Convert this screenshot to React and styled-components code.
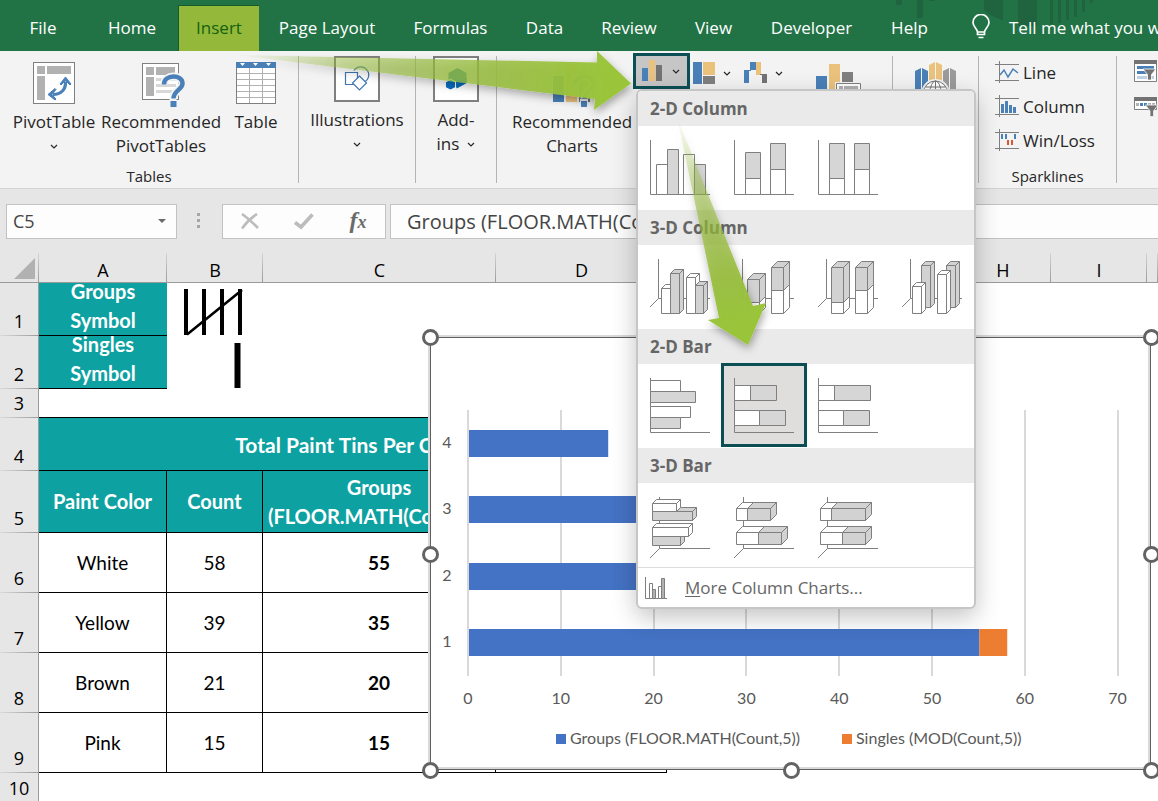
import React from 'react'
import styled, { createGlobalStyle, css } from 'styled-components';

const GlobalStyle=createGlobalStyle`
*{
  box-sizing:border-box;
}
body{
  margin:0;
  overflow:hidden;
  background:#ffffff;
}
button,input{
  font:inherit;
  color:inherit;
}
button{
  border:none;
  padding:0;
  background:none;
  cursor:pointer;
}
svg{
  display:block;
}
`

const Page=styled.div`
position:relative;
min-height:100vh;
display:flex;
flex-direction:column;
overflow:hidden;
font-family:"Open Sans","Noto Sans",sans-serif;
font-size:17px;
color:#262626;
`

/* tab strip */

const TabStrip=styled.nav`
position:relative;
display:flex;
align-items:flex-end;
height:51px;
background:#217346;
color:#ffffff;
white-space:nowrap;
`

const StripArt=styled.svg`
position:absolute;
top:0;
left:880px;
`

const Tab=styled.button`
position:relative;
flex:none;
height:46px;
padding-bottom:2px;
width:${({$width})=>$width}px;
${({$active})=>$active&&css`
  background:#94b93a;
  color:#13610f;
  border-top:1px solid #155c2c;
  border-left:1px solid #155c2c;
`}
`

const TellMe=styled.button`
position:relative;
display:flex;
align-items:center;
gap:19px;
height:46px;
padding-bottom:2px;
margin-left:24px;
`

/* ribbon */

const Ribbon=styled.div`
display:flex;
height:138px;
padding:5px 0;
background:#f3f3f3;
border-bottom:1px solid #d2d2d2;
`

const Group=styled.section`
flex:none;
display:flex;
flex-direction:column;
width:${({$width})=>$width}px;
border-right:${({$last})=>$last?'none':'1px solid #b4b4b4'};
`

const GroupItems=styled.div`
flex:1;
display:flex;
justify-content:${({$center})=>$center?'center':'flex-start'};
gap:3px;
padding-left:${({$left})=>$left||0}px;
`

const GroupName=styled.h2`
margin:0;
font-size:15px;
font-weight:400;
line-height:14px;
text-align:center;
`

const BigButton=styled.button`
display:flex;
flex-direction:column;
align-items:center;
justify-content:flex-start;
gap:6px;
width:${({$width})=>$width}px;
padding-top:${({$boxed})=>$boxed?0:6}px;
line-height:24px;
white-space:nowrap;
svg{
  flex:none;
  overflow:visible;
}
`

const IconBox=styled.span`
display:flex;
align-items:center;
justify-content:center;
width:46px;
height:46px;
border:2px solid #7f7f7f;
background:#ffffff;
`

const Label=styled.span`
display:flex;
flex-direction:column;
align-items:center;
`

const InlineLabel=styled.span`
display:flex;
align-items:center;
gap:8px;
`

const ChartButtons=styled.div`
position:relative;
display:flex;
align-items:flex-start;
margin-left:-4px;
`

const ChartButton=styled.button`
display:flex;
align-items:center;
gap:8px;
width:51px;
height:36px;
padding-left:3px;
padding-bottom:2px;
`

const OpenChartButton=styled(ChartButton)`
width:57px;
margin-top:-3px;
padding-left:6px;
padding-bottom:0;
border:3px solid #0b4f55;
background:#c6c6c6;
`

const PivotChartButton=styled.button`
margin:6px 0 0 24px;
`

const SparkList=styled.div`
display:flex;
flex-direction:column;
padding-left:16px;
`

const SparkButton=styled.button`
display:flex;
align-items:center;
gap:4px;
height:34px;
line-height:24px;
`

const FilterList=styled.div`
display:flex;
flex-direction:column;
gap:14px;
padding:4px 0 0 17px;
`

/* drop-down gallery */

const Gallery=styled.div`
position:absolute;
z-index:5;
top:33px;
left:3px;
width:340px;
border:2px solid #c6c6c6;
border-radius:6px;
overflow:hidden;
background:#ffffff;
color:#666666;
box-shadow:0 8px 24px rgba(0,0,0,0.24);
`

const GalleryTitle=styled.h3`
margin:0;
padding-left:12px;
background:#eaeaea;
font-size:17px;
font-weight:700;
line-height:35px;
`

const GalleryRow=styled.div`
display:flex;
align-items:flex-start;
height:84px;
`

const GalleryItem=styled.button`
display:flex;
align-items:flex-start;
width:84px;
height:82px;
${({$selected})=>$selected&&css`
  background:#e0dedc;
  box-shadow:0 0 0 1px #0b4f55,inset 0 0 0 2px #0b4f55;
`}
`

const MoreCharts=styled.button`
display:flex;
align-items:center;
gap:18px;
width:100%;
height:40px;
padding-left:7px;
border-top:1px solid #dcdcdc;
u{
  text-underline-offset:2px;
}
`

/* formula bar */

const FormulaRow=styled.div`
display:flex;
align-items:center;
height:64px;
padding-left:6px;
background:#e6e6e6;
font-size:18px;
color:#444444;
`

const NameBox=styled.label`
display:flex;
align-items:center;
width:171px;
height:35px;
padding-right:10px;
border:1px solid #c2c2c2;
background:#fdfdfd;
input{
  flex:1;
  min-width:0;
  padding:0 6px;
  border:none;
  background:none;
  outline:none;
}
`

const Dots=styled.svg`
margin:0 21px 0 20px;
`

const FxBox=styled.div`
display:flex;
align-items:center;
justify-content:space-between;
width:164px;
height:35px;
margin-right:4px;
padding:0 17px 0 18px;
border:1px solid #c2c2c2;
background:#fdfdfd;
`

const Fx=styled.button`
width:20px;
font-family:"Liberation Serif",serif;
font-size:24px;
font-style:italic;
font-weight:700;
line-height:28px;
color:#6a6a6a;
span{
  font-size:18px;
}
`

const FormulaInput=styled.input`
flex:1;
min-width:0;
height:35px;
padding:0 16px;
border:1px solid #c2c2c2;
border-right:none;
background:#fdfdfd;
font-size:20px;
outline:none;
`

/* sheet */

const Sheet=styled.main`
position:relative;
flex:1;
`

const Grid=styled.table`
width:100%;
table-layout:fixed;
border-collapse:separate;
border-spacing:0;
font-family:Lato,"Open Sans",sans-serif;
font-size:19px;
line-height:29px;
color:#000000;
th,td{
  padding:0;
}
`

const ColumnHead=styled.th`
height:30px;
border-bottom:1px solid #9b9b9b;
background:linear-gradient(#d4d4d4,#9b9b9b) right / 1px 100% no-repeat #e6e6e6;
font-family:"Open Sans",sans-serif;
font-size:18px;
font-weight:400;
line-height:24px;
vertical-align:bottom;
`

const Corner=styled(ColumnHead)`
svg{
  margin:0 0 3px 14px;
}
`

const RowHead=styled.th`
height:${({$height})=>$height}px;
border-right:1px solid #9b9b9b;
background:linear-gradient(90deg,#dadada,#9b9b9b) bottom / 100% 1px no-repeat #e6e6e6;
font-family:"Open Sans",sans-serif;
font-size:18px;
font-weight:400;
line-height:29px;
vertical-align:bottom;
`

const Cell=styled.td`
text-align:center;
vertical-align:middle;
font-weight:${({$bold,$teal})=>$bold||$teal?700:400};
border-bottom:${({$line})=>$line?'1px solid #000000':'none'};
border-right:${({$side})=>$side?'1px solid #000000':'none'};
${({$teal})=>$teal&&css`
  background:#0ea1a1;
  color:#ffffff;
  font-size:20px;
`}
`

const TitleCell=styled(Cell)`
font-size:21px;
`

const Wrapped=styled.div`
display:flex;
flex-direction:column;
align-items:center;
justify-content:${({$bottom})=>$bottom?'flex-end':'center'};
height:${({$height})=>$height}px;
overflow:hidden;
white-space:nowrap;
`

const ChartFrame=styled.figure`
position:absolute;
z-index:1;
top:84px;
left:430px;
width:721px;
height:433px;
margin:0;
background:#ffffff;
box-shadow:-2px -2px 0 #d9d9d9,inset 0 0 0 1px #5f5f5f,inset -3px -3px 0 #d9d9d9;
`

const Handle=styled.span`
position:absolute;
top:${({$y})=>$y}%;
left:${({$x})=>$x}%;
width:17px;
height:17px;
margin:-8px;
border:3px solid #636363;
border-radius:50%;
background:#ffffff;
`

const Arrows=styled.svg`
position:absolute;
z-index:9;
top:0;
left:0;
pointer-events:none;
`

const Chevron=()=>(
  <svg width="8" height="24" viewBox="0 0 8 24" fill="none" stroke="#262626" strokeWidth="1.2">
    <path d="M1 11 4 14 7 11"/>
  </svg>
)

const PivotTableIcon=()=>(
  <svg width="42" height="42" viewBox="0 0 42 42">
    <rect x=".5" y=".5" width="41" height="41" fill="#fff" stroke="#7f7f7f"/>
    <path d="M4 4h8v8H4zM14 4h24v8H14zM4 14h8v24H4z" fill="#b1b1b1"/>
    <path d="M20 32.500c8 0 13-5 12.500-13" fill="none" stroke="#4a80b8" strokeWidth="3.200"/>
    <path d="M32.500 15l5.500 7-1 1-4.500-4.500-4.500 4.500-1-1zM15 32.500l7-6 1 1-4 5 4 4.500-1 1z" fill="#4a80b8" stroke="#4a80b8"/>
  </svg>
)

const RecommendedPivotIcon=()=>(
  <svg width="47" height="42" viewBox="-4 0 47 42">
    <rect x=".5" y="1.500" width="36" height="36" fill="#fff" stroke="#7f7f7f"/>
    <path d="M4 5h8v8H4zM14 5h19v8H14zM4 15h8v19H4z" fill="#b1b1b1"/>
    <path d="M14 16h20v3H14zM14 22h20v3H14zM14 28h20v3H14z" fill="#d8d8d8"/>
    <path d="M22 22.500c0-10.500 18.500-10.500 18.500-1 0 6-9 7-9 15" fill="none" stroke="#f3f3f3" strokeWidth="8"/>
    <path d="M22 22.500c0-10.500 18.500-10.500 18.500-1 0 6-9 7-9 15" fill="none" stroke="#4a80b8" strokeWidth="4.500"/>
    <path d="M27.500 37h7v8h-7z" fill="#f3f3f3"/>
    <path d="M28.500 39h6v6h-6z" fill="#4a80b8"/>
  </svg>
)

const TableIcon=()=>(
  <svg width="40" height="42" viewBox="0 0 40 42">
    <rect x=".5" y=".5" width="39" height="41" fill="#fff" stroke="#7f7f7f"/>
    <path d="M13.500 6v36M26.500 6v36M0 11.500h40M0 17.500h40M0 23.500h40M0 29.500h40M0 35.500h40" stroke="#b1b1b1" fill="none"/>
    <path d="M0 0h40v6H0z" fill="#4a80b8"/>
    <path d="M4 1h5L6.500 4zM17 1h5l-2.500 3zM30 1h5l-2.500 3z" fill="#fff"/>
    <path d="M.5 6v35.500h39V6" stroke="#7f7f7f" fill="none"/>
  </svg>
)

const ShapesIcon=()=>(
  <svg width="26" height="26" viewBox="0 0 26 26" fill="none" stroke="#3f76b0" strokeWidth="1.200">
    <path d="M10 4.500a8 8 0 1 1 9 12"/>
    <path d="M1.500 6.500h12v12h-12z" fill="#fff"/>
    <path d="M15.500 10 22.500 17l-7 7-7-7z" fill="#fff"/>
  </svg>
)

const AddinsIcon=()=>(
  <svg width="22" height="22" viewBox="0 0 22 22">
    <path d="M12.500 0l9 5v10l-9 5-9-5V5z" fill="#1b80b5"/>
    <path d="M5.500 10.500l5.500 3v6.500l-5.500 2-5-2.500v-6z" fill="#fff"/>
    <path d="M5.500 12l4.500 2.300v5L5.500 21.500 1 19.300v-5zM11.500 12.500v8l10-5.500v-5z" fill="#0a6cc0"/>
  </svg>
)

const RecommendedChartsIcon=()=>(
  <svg width="50" height="42" viewBox="-6 0 50 42">
    <path d="M0 14h11v26H0z" fill="#4a80b8"/>
    <path d="M13 2h11v38H13z" fill="#ebc27c"/>
    <path d="M26 10h11v30H26z" fill="#737373"/>
    <path d="M22 22.500c0-10.500 18.500-10.500 18.500-1 0 6-9 7-9 15" fill="none" stroke="#f3f3f3" strokeWidth="8"/>
    <path d="M22 22.500c0-10.500 18.500-10.500 18.500-1 0 6-9 7-9 15" fill="none" stroke="#4a80b8" strokeWidth="4.500"/>
    <path d="M27 37h8v8h-8z" fill="#f3f3f3"/>
    <path d="M28 39h6v6h-6z" fill="#4a80b8"/>
  </svg>
)

const ColumnIcon=()=>(
  <svg width="22" height="24" viewBox="0 0 22 24">
    <path d="M0 9h6v13H0z" fill="#4a80b8"/>
    <path d="M7 1h6v21H7z" fill="#ebc27c"/>
    <path d="M14 6h6v16h-6z" fill="#737373"/>
  </svg>
)

const TreemapIcon=()=>(
  <svg width="22" height="24" viewBox="0 0 22 24">
    <path d="M0 1h9v22H0z" fill="#4a80b8"/>
    <path d="M10 1h12v13H10z" fill="#ebc27c"/>
    <path d="M10 15h12v8H10z" fill="#7f7f7f"/>
  </svg>
)

const WaterfallIcon=()=>(
  <svg width="23" height="24" viewBox="0 0 23 24">
    <path d="M0 9h5v13H0zM6 1h6v8H6zM3 9h4v1H3z" fill="#4a80b8"/>
    <path d="M12 1h5v13h-5z" fill="#ebc27c"/>
    <path d="M16 13h7v9h-5v-8h-2z" fill="#737373"/>
  </svg>
)

const PivotChartIcon=()=>(
  <svg width="46" height="44" viewBox="0 0 46 44">
    <path d="M0 14h11v26H0z" fill="#4a80b8"/>
    <path d="M13 2h11v38H13z" fill="#ebc27c"/>
    <path d="M26 10h11v30H26z" fill="#7f7f7f"/>
    <path d="M19 20h28v24H19z" fill="#f3f3f3"/>
    <path d="M20.500 21.500h24v20h-24z" fill="#fff" stroke="#7f7f7f"/>
    <path d="M23 24h4v4h-4zM28 24h14v4H28z" fill="#b1b1b1"/>
  </svg>
)

const MapIcon=()=>(
  <svg width="42" height="44" viewBox="0 0 42 44">
    <path d="M0 9l6-3v34H0zM7 6l6 3v31H7z" fill="#4a80b8"/>
    <path d="M14 3l6-3v40h-6zM21 0l6 3v37h-6z" fill="#ebc27c"/>
    <path d="M28 9l6-3v34h-6zM35 6l6 3v31h-6z" fill="#9b9b9b"/>
    <circle cx="20.500" cy="31" r="14" fill="#f3f3f3"/>
    <g fill="#fff" stroke="#737373">
      <circle cx="20.500" cy="31" r="12"/>
      <ellipse cx="20.500" cy="31" rx="5.500" ry="12"/>
      <path d="M20.500 19v24M11 25h19M8.500 31h24"/>
    </g>
  </svg>
)

const SparkIcon=({children})=>(
  <svg width="24" height="24" viewBox="0 0 24 24" fill="none">
    {children}
    <path d="M0 3.500h24M0 19.500h24M4.500 0v22" stroke="#7f7f7f"/>
  </svg>
)

const SlicerIcon=()=>(
  <svg width="23" height="23" viewBox="0 0 23 23">
    <path d="M.5.5h22v21H.5z" fill="#fff" stroke="#7f7f7f"/>
    <path d="M0 0h23v4H0z" fill="#737373"/>
    <path d="M3 6h17v3H3zM3 11h10v3H3z" fill="#4a80b8"/>
    <path d="M3 16h17v3H3z" fill="#bdd0e6"/>
    <path d="M9 9h13l-4.500 5.500V20h-4v-5.500z" fill="#737373" stroke="#fff" strokeWidth=".8"/>
  </svg>
)

const TimelineIcon=()=>(
  <svg width="24" height="20" viewBox="0 0 24 20">
    <path d="M.5.5h22v12H.5z" fill="#fff" stroke="#7f7f7f"/>
    <path d="M0 0h23v4H0z" fill="#737373"/>
    <path d="M2 6h3v3H2zM14 6h3v3h-3zM18 6h3v3h-3z" fill="#b1b1b1"/>
    <path d="M6 6h3v3H6zM10 6h3v3h-3z" fill="#4a80b8"/>
    <path d="M11.500 8H24l-4.500 6v5.500h-3.500V14z" fill="#737373" stroke="#f3f3f3" strokeWidth=".8"/>
  </svg>
)

/* gallery thumbnails, flat bars are [x, y, width, height, grey],
   solid ones are [x, y, width, height, depth, grey] */

const Thumb=({bars=[],blocks=[],tilt})=>(
  <svg width="84" height="82" viewBox="0 0 84 82" fill="none" stroke="#7f7f7f" strokeLinejoin="round">
    {!tilt&&<path d="M12.500 14v54.500H72"/>}
    {tilt==='column'&&<path d="M20.500 14v39.500H72M20.500 53.500l-8.500 8.500"/>}
    {tilt==='bar'&&<path d="M21.500 14v51.500H72M21.500 65.500l-9.500 9.500"/>}
    {bars.map(([x,y,w,h,grey])=>(
      <rect key={`${x}-${y}`} x={x} y={y} width={w} height={h} fill={grey?'#d6d6d6':'#fff'}/>
    ))}
    {blocks.map(([x,y,w,h,d,grey])=>(
      <g key={`${x}-${y}`} fill={grey?'#d2d2d2':'#fff'}>
        <path d={`M${x} ${y}l${d} ${-d}h${w}l${-d} ${d}z`}/>
        <path d={`M${x+w} ${y}l${d} ${-d}v${h}l${-d} ${d}z`}/>
        <rect x={x} y={y} width={w} height={h}/>
      </g>
    ))}
  </svg>
)

const gallery=[
  {
    title:'2-D Column',
    items:[
      {name:'Clustered Column',bars:[[18.5,38.5,11,30,0],[29.5,23.5,11,45,1],[45.5,28.5,11,40,0],[56.5,38.5,11,30,1]]},
      {name:'Stacked Column',bars:[[23.5,26.5,15,26,1],[23.5,52.5,15,16,0],[48.5,17.5,15,26,1],[48.5,43.5,15,25,0]]},
      {name:'100% Stacked Column',bars:[[23.5,17.5,15,35,1],[23.5,52.5,15,16,0],[48.5,17.5,15,26,1],[48.5,43.5,15,25,0]]},
    ],
  },
  {
    title:'3-D Column',
    tilt:'column',
    items:[
      {name:'3-D Clustered Column',blocks:[[23.5,43.5,9,25,4,0],[32.5,28.5,9,40,4,1],[48.5,32.5,9,36,4,0],[57.5,40.5,8,28,4,1]]},
      {name:'3-D Stacked Column',blocks:[[25.5,57.5,12,11,6,0],[25.5,34.5,12,23,6,1],[49.5,45.5,12,23,6,0],[49.5,22.5,12,23,6,1]]},
      {name:'3-D 100% Stacked Column',blocks:[[25.5,57.5,12,11,6,0],[25.5,22.5,12,35,6,1],[49.5,45.5,12,23,6,0],[49.5,22.5,12,23,6,1]]},
      {name:'3-D Column',blocks:[[31.5,20.5,9,42,4,1],[22.5,41.5,9,27,4,0],[56.5,20.5,9,42,4,1],[47.5,29.5,9,39,4,0]]},
    ],
  },
  {
    title:'2-D Bar',
    items:[
      {name:'Clustered Bar',bars:[[12.5,16.5,30,11,0],[12.5,27.5,45,11,1],[12.5,42.5,40,11,0],[12.5,53.5,30,11,1]]},
      {name:'Stacked Bar',selected:true,bars:[[12.5,21.5,16,15,0],[28.5,21.5,26,15,1],[12.5,46.5,25,15,0],[37.5,46.5,26,15,1]]},
      {name:'100% Stacked Bar',bars:[[12.5,21.5,16,15,0],[28.5,21.5,36,15,1],[12.5,46.5,25,15,0],[37.5,46.5,26,15,1]]},
    ],
  },
  {
    title:'3-D Bar',
    tilt:'bar',
    items:[
      {name:'3-D Clustered Bar',blocks:[[14.5,28.5,40,9,4,1],[14.5,20.5,24,8,4,0],[14.5,53.5,28,9,4,1],[14.5,44.5,36,9,4,0]]},
      {name:'3-D Stacked Bar',blocks:[[14.5,25.5,11,12,6,0],[25.5,25.5,23,12,6,1],[14.5,49.5,22,12,6,0],[36.5,49.5,23,12,6,1]]},
      {name:'3-D 100% Stacked Bar',blocks:[[14.5,25.5,11,12,6,0],[25.5,25.5,34,12,6,1],[14.5,49.5,22,12,6,0],[36.5,49.5,23,12,6,1]]},
    ],
  },
]

const tabs=[
  ['File',86],['Home',92],['Insert',81],['Page Layout',136],['Formulas',111],
  ['Data',77],['Review',92],['View',77],['Developer',119],['Help',77],
]

const columns=[['A',128],['B',96],['C',233],['D',171],['E',96],['F',96],['G',96],['H',96],['I',96]]

const paints=[
  [6,'White',58,55],
  [7,'Yellow',39,35],
  [8,'Brown',21,20],
  [9,'Pink',15,15],
]

/* bottom to top, one unit is 9.28px wide */
const series=[[1,55,3],[2,35,4],[3,20,1],[4,15,0]]
const ticks=[0,10,20,30,40,50,60,70]
const axisX=37
const unit=9.28

function StackedBarChart(){
  return (
    <svg width="100%" height="100%" viewBox="-1 -1 721 433" fontFamily="Lato, sans-serif" fontSize="16" fill="#595959">
      {ticks.map((t)=>(
        <g key={t}>
          <path d={`M${Math.round(axisX+t*unit)} 72v266`} stroke="#d9d9d9" strokeWidth="2"/>
          <text x={axisX+t*unit} y="366" textAnchor="middle">{t}</text>
        </g>
      ))}
      {series.map(([n,groups,singles])=>{
        const y=Math.round(291-(n-1)*66.3)
        return (
          <g key={n}>
            <text x="16" y={y+18} textAnchor="middle">{n}</text>
            <rect x={axisX+1} y={y} width={groups*unit} height="27" fill="#4472c4"/>
            <rect x={axisX+1+groups*unit} y={y} width={singles*unit} height="27" fill="#ed7d31"/>
          </g>
        )
      })}
      <rect x="125" y="396" width="10" height="10" fill="#4472c4"/>
      <text x="139" y="406">Groups (FLOOR.MATH(Count,5))</text>
      <rect x="411" y="396" width="10" height="10" fill="#ed7d31"/>
      <text x="425" y="406">Singles (MOD(Count,5))</text>
    </svg>
  )
}

function ChartGallery(){
  return (
    <Gallery>
      {gallery.map(({title,tilt,items})=>(
        <div key={title}>
          <GalleryTitle>{title}</GalleryTitle>
          <GalleryRow>
            {items.map(({name,selected,bars,blocks})=>(
              <GalleryItem key={name} aria-label={name} aria-pressed={!!selected} $selected={selected}>
                <Thumb bars={bars} blocks={blocks} tilt={tilt}/>
              </GalleryItem>
            ))}
          </GalleryRow>
        </div>
      ))}
      <MoreCharts>
        <svg width="22" height="22" viewBox="0 0 22 22" fill="#fff" stroke="#7f7f7f">
          <path d="M.5 0v21.500H22" fill="none"/>
          <path d="M4.500 6.500h3v15h-3zM13.500 9.500h3v12h-3z"/>
          <path d="M7.500 12.500h3v9h-3zM16.500 1.500h3v20h-3z" fill="#b1b1b1"/>
        </svg>
        <span><u>M</u>ore Column Charts...</span>
      </MoreCharts>
    </Gallery>
  )
}

function RibbonBar(){
  return (
    <Ribbon>
      <Group $width={299}>
        <GroupItems $left={12}>
          <BigButton $width={84}>
            <PivotTableIcon/>
            <Label>PivotTable<Chevron/></Label>
          </BigButton>
          <BigButton $width={124}>
            <RecommendedPivotIcon/>
            <Label><span>Recommended</span><span>PivotTables</span></Label>
          </BigButton>
          <BigButton $width={60}>
            <TableIcon/>
            <Label>Table</Label>
          </BigButton>
        </GroupItems>
        <GroupName>Tables</GroupName>
      </Group>
      <Group $width={117}>
        <GroupItems $center>
          <BigButton $width={100} $boxed>
            <IconBox><ShapesIcon/></IconBox>
            <Label>Illustrations<Chevron/></Label>
          </BigButton>
        </GroupItems>
      </Group>
      <Group $width={81}>
        <GroupItems $center>
          <BigButton $width={60} $boxed>
            <IconBox><AddinsIcon/></IconBox>
            <Label>
              <span>Add-</span>
              <InlineLabel>ins <Chevron/></InlineLabel>
            </Label>
          </BigButton>
        </GroupItems>
      </Group>
      <Group $width={396}>
        <GroupItems $left={13}>
          <BigButton $width={124}>
            <RecommendedChartsIcon/>
            <Label><span>Recommended</span><span>Charts</span></Label>
          </BigButton>
          <ChartButtons>
            <OpenChartButton aria-label="Insert Column or Bar Chart" aria-expanded="true">
              <ColumnIcon/><Chevron/>
            </OpenChartButton>
            <ChartButton aria-label="Insert Hierarchy Chart"><TreemapIcon/><Chevron/></ChartButton>
            <ChartButton aria-label="Insert Waterfall Chart"><WaterfallIcon/><Chevron/></ChartButton>
            <PivotChartButton aria-label="PivotChart"><PivotChartIcon/></PivotChartButton>
            <ChartGallery/>
          </ChartButtons>
        </GroupItems>
      </Group>
      <Group $width={86}>
        <GroupItems $center>
          <BigButton $width={60} aria-label="3D Map"><MapIcon/></BigButton>
        </GroupItems>
      </Group>
      <Group $width={138}>
        <GroupItems>
          <SparkList>
            <SparkButton>
              <SparkIcon><path d="M5 14l4-5 4 7 5-8 5 4" stroke="#4a80b8" strokeWidth="1.500"/></SparkIcon>
              Line
            </SparkButton>
            <SparkButton>
              <SparkIcon><path d="M6 9h3v9H6zM10 6h3v12h-3zM14 10h3v8h-3zM18 12h3v6h-3z" fill="#4a80b8"/></SparkIcon>
              Column
            </SparkButton>
            <SparkButton>
              <SparkIcon>
                <path d="M6 5h2v5H6zM10 5h2v5h-2zM19 5h2v5h-2z" fill="#4a80b8"/>
                <path d="M12 11h2v5h-2zM16 11h2v5h-2z" fill="#dd5532"/>
              </SparkIcon>
              Win/Loss
            </SparkButton>
          </SparkList>
        </GroupItems>
        <GroupName>Sparklines</GroupName>
      </Group>
      <Group $width={60} $last>
        <FilterList>
          <button aria-label="Slicer"><SlicerIcon/></button>
          <button aria-label="Timeline"><TimelineIcon/></button>
        </FilterList>
      </Group>
    </Ribbon>
  )
}

function SheetGrid(){
  return (
    <Grid>
      <colgroup>
        <col width="39"/>
        {columns.map(([name,width])=><col key={name} width={width}/>)}
        <col/>
      </colgroup>
      <thead>
        <tr>
          <Corner aria-label="Select all">
            <svg width="21" height="21" viewBox="0 0 21 21"><path d="M21 0v21H0z" fill="#b1b1b1"/></svg>
          </Corner>
          {columns.map(([name])=><ColumnHead key={name}>{name}</ColumnHead>)}
          <ColumnHead/>
        </tr>
      </thead>
      <tbody>
        <tr>
          <RowHead $height={53}>1</RowHead>
          <Cell $teal $line><Wrapped $height={52} $bottom><span>Groups</span><span>Symbol</span></Wrapped></Cell>
          <Cell>
            <svg width="96" height="53" viewBox="0 0 96 53" fill="none" stroke="#000">
              <path d="M19 6v46M37 6v46M55 6v46M73 6v46" strokeWidth="4"/>
              <path d="M20 51.500 75 7" strokeWidth="2.600"/>
            </svg>
          </Cell>
          <Cell colSpan={8}/>
        </tr>
        <tr>
          <RowHead $height={53}>2</RowHead>
          <Cell $teal $line><Wrapped $height={52} $bottom><span>Singles</span><span>Symbol</span></Wrapped></Cell>
          <Cell>
            <svg width="96" height="53" viewBox="0 0 96 53"><path d="M67.500 7h6v45h-6z"/></svg>
          </Cell>
          <Cell colSpan={8}/>
        </tr>
        <tr>
          <RowHead $height={29}>3</RowHead>
          <Cell colSpan={4} $line/>
          <Cell colSpan={6}/>
        </tr>
        <tr>
          <RowHead $height={53}>4</RowHead>
          <TitleCell colSpan={4} $teal $line $side>Total Paint Tins Per Color</TitleCell>
          <Cell colSpan={6}/>
        </tr>
        <tr>
          <RowHead $height={62}>5</RowHead>
          <Cell $teal $line $side>Paint Color</Cell>
          <Cell $teal $line $side>Count</Cell>
          <Cell $teal $line $side>
            <Wrapped $height={61}><span>Groups</span><span>(FLOOR.MATH(Count,5))</span></Wrapped>
          </Cell>
          <Cell $teal $line $side/>
          <Cell colSpan={6}/>
        </tr>
        {paints.map(([row,color,count,groups])=>(
          <tr key={row}>
            <RowHead $height={60}>{row}</RowHead>
            <Cell $line $side>{color}</Cell>
            <Cell $line $side>{count}</Cell>
            <Cell $line $side $bold>{groups}</Cell>
            <Cell $line $side/>
            <Cell colSpan={6}/>
          </tr>
        ))}
        <tr>
          <RowHead $height={30}>10</RowHead>
          <Cell colSpan={10}/>
        </tr>
      </tbody>
    </Grid>
  )
}

function Pointers(){
  return (
    <Arrows width="1158" height="801" viewBox="0 0 1158 801">
      <defs>
        <linearGradient id="across" gradientUnits="userSpaceOnUse" x1="235" y1="56" x2="610" y2="80">
          <stop offset="0" stopColor="#95b83c" stopOpacity="0"/>
          <stop offset=".3" stopColor="#95b83c" stopOpacity=".5"/>
          <stop offset=".7" stopColor="#97bd3c" stopOpacity=".84"/>
          <stop offset="1" stopColor="#9ac53b"/>
        </linearGradient>
        <linearGradient id="down" gradientUnits="userSpaceOnUse" x1="677" y1="117" x2="740" y2="320">
          <stop offset="0" stopColor="#95b83c" stopOpacity="0"/>
          <stop offset=".4" stopColor="#95b83c" stopOpacity=".55"/>
          <stop offset=".8" stopColor="#97bd3c" stopOpacity=".93"/>
          <stop offset="1" stopColor="#9ac53b"/>
        </linearGradient>
        <filter id="lift" x="-10%" y="-20%" width="120%" height="150%">
          <feDropShadow dx="1" dy="4" stdDeviation="4" floodColor="#000" floodOpacity=".35"/>
        </filter>
      </defs>
      <path d="M235 55 597 62.500V51l34 32.500L594 110l1-11z" fill="url(#across)" filter="url(#lift)"/>
      <path d="M677 117 753 306l13-3-18 42-40-25 11-2z" fill="url(#down)" filter="url(#lift)"/>
    </Arrows>
  )
}

const handles=[[0,0],[100,0],[0,50],[100,50],[0,100],[50,100],[100,100]]

export default function App() {
  return (
    <Page>
      <GlobalStyle/>
      <TabStrip>
        <StripArt width="278" height="36" viewBox="0 0 278 36" fill="#1f633f">
          <path d="M16 0h6v5h-6zM37 0h6v18h-6zM49 0h6v1h-6zM104 0h19v20q-12-3-19-10zM138 0h19v26h-19zM170 0h3v24h-3zM178 0h3v23h-3zM186 0h3v20h-3zM194 0h3v17h-3zM202 0h3v12h-3zM210 0l4 0-4 4z"/>
        </StripArt>
        {tabs.map(([name,width])=>(
          <Tab key={name} $width={width} $active={name==='Insert'}>{name}</Tab>
        ))}
        <TellMe>
          <svg width="18" height="26" viewBox="0 0 18 26" fill="none" stroke="#fff" strokeWidth="1.700">
            <path d="M5.500 18c0-3-4.500-5-4.500-9.500a8 8 0 0 1 16 0c0 4.500-4.500 6.500-4.500 9.500v2.500h-7zM5.500 18h7M6.500 23.500h5"/>
          </svg>
          Tell me what you want to do
        </TellMe>
      </TabStrip>
      <RibbonBar/>
      <FormulaRow>
        <NameBox>
          <input aria-label="Name box" defaultValue="C5"/>
          <svg width="8" height="4" viewBox="0 0 8 4"><path d="M0 0h8L4 4z" fill="#6a6a6a"/></svg>
        </NameBox>
        <Dots width="4" height="16" viewBox="0 0 4 16" fill="#a6a6a6">
          <path d="M0 0h3v3H0zM0 6h3v3H0zM0 12h3v3H0z"/>
        </Dots>
        <FxBox>
          <button aria-label="Cancel">
            <svg width="18" height="17" viewBox="0 0 18 17" fill="none" stroke="#bcbcbc" strokeWidth="2.600"><path d="M1 1q7 5 16 14M16 1Q7 7 1 15.500"/></svg>
          </button>
          <button aria-label="Enter">
            <svg width="20" height="17" viewBox="0 0 20 17" fill="none" stroke="#bcbcbc" strokeWidth="3.600"><path d="M1 9.500 7 14 18.500 1.500"/></svg>
          </button>
          <Fx aria-label="Insert function">f<span>x</span></Fx>
        </FxBox>
        <FormulaInput aria-label="Formula bar" defaultValue="Groups (FLOOR.MATH(Count,5))"/>
      </FormulaRow>
      <Sheet>
        <SheetGrid/>
        <ChartFrame>
          <StackedBarChart/>
          {handles.map(([x,y])=><Handle key={`${x}-${y}`} $x={x} $y={y}/>)}
        </ChartFrame>
      </Sheet>
      <Pointers/>
    </Page>
  )
}
